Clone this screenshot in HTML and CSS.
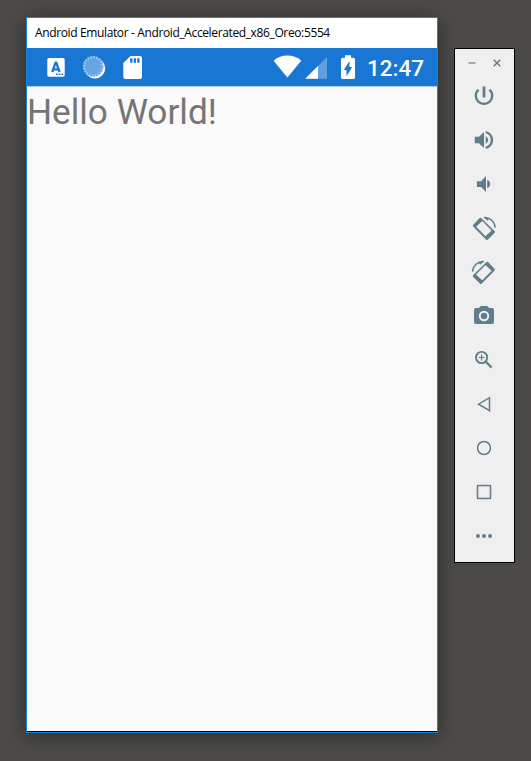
FILE: index.html
```html
<!DOCTYPE html>
<html lang="en">
<head>
<meta charset="utf-8">
<title>Android Emulator</title>
<link rel="stylesheet" href="styles.css">
</head>
<body>
<main class="desktop">
  <section class="emulator">
    <header class="titlebar"><span>Android Emulator - Android_Accelerated_x86_Oreo:5554</span></header>
    <div class="statusbar">
      <svg class="notifications" width="98" height="26" viewBox="46 54 98 26">
        <path fill="#fff" d="M49 58h14q1.700 0 1.700 1.700v15.300q0 1.700-1.700 1.700H49q-1.700 0-1.700-1.700V59.700q0-1.700 1.700-1.700z"/>
        <path fill="none" stroke="#1976d2" stroke-width="2.300" d="M52.200 72l3.400-9.400h.6L59.600 72M53.500 69.300h5"/>
        <path fill="#1976d2" d="M56 73.600h1.700v1.500H56zm2.700 0h1.700v1.500h-1.700zm2.700 0h1.700v1.500h-1.700z"/>
        <circle cx="94.900" cy="68.200" r="10.300" fill="#fff"/>
        <circle cx="93.200" cy="66.400" r="10.300" fill="#68a5e4"/>
        <circle cx="93.200" cy="66.400" r="9.300" fill="none" stroke="#acd0f2" stroke-width="2.200" stroke-dasharray="1.100 1.820"/>
        <path fill="#fff" d="M130.500 56h9.500q2 0 2 2v19q0 2-2 2h-14.700q-2 0-2-2V63z"/>
        <path fill="#1976d2" d="M130.200 58.300h2.300v4.500h-2.300zm3.500 0h2.300v4.500h-2.300zm3.500 0h2.300v4.500h-2.300z"/>
      </svg>
      <div class="system">
        <svg width="83" height="26" viewBox="273 54 83 26">
          <path fill="#fff" d="M287.400 77.600L273.600 60.700q6.100-5.100 13.800-5.100t13.900 5.100z"/>
          <path fill="#619fdf" d="M327 57v21.700h-21.700z"/>
          <path fill="#fff" d="M318 66v12.700h-12.700z"/>
          <path fill="#fff" d="M345 55.300h6v2.400h2.500q1.500 0 1.500 1.500v18.300q0 1.500-1.500 1.500h-11q-1.500 0-1.500-1.500V59.200q0-1.500 1.500-1.500h2.500z"/>
          <path fill="#1976d2" d="M349.400 61v6h2.800l-5.700 9.200V70h-2.700z"/>
        </svg>
        <span class="clock">12:47</span>
      </div>
    </div>
    <div class="screen"><p>Hello World!</p></div>
  </section>

  <aside class="toolbar">
    <div class="controls">
      <svg width="8" height="10" viewBox="0 0 8 10"><path d="M.5 5h7" stroke="#9aabb4" stroke-width="2"/></svg>
      <svg width="8" height="10" viewBox="0 0 8 10"><path d="M.7 1.700l6.600 6.600M7.300 1.700L.7 8.300" stroke="#607d8b" stroke-width="1.500"/></svg>
    </div>
    <svg class="tool" viewBox="0 0 24 24"><path fill="none" stroke="#607d8b" stroke-width="2.400" d="M6.500 5.700a8.200 8.200 0 1 0 11 0"/><path fill="#607d8b" d="M10.600 2.500h2.800v11h-2.800z"/></svg>
    <svg class="tool" viewBox="0 0 24 24"><path fill="#607d8b" d="M2.800 8.700v6.600h4.200L12 20V4L7 8.700zM13.700 8a4.500 4.500 0 0 1 0 8z"/><path fill="none" stroke="#607d8b" stroke-width="2.400" d="M13.700 4.200a8 8 0 0 1 0 15.600"/></svg>
    <svg class="tool" viewBox="0 0 24 24"><path fill="#607d8b" d="M4.900 9.200v5.800h4.200l4.900 5V4L9.100 9.200zM15.200 8a4.200 4.200 0 0 1 0 8z"/></svg>
    <svg class="tool" viewBox="0 0 24 24"><use href="#rotate"/></svg>
    <svg class="tool" viewBox="0 0 24 24"><use href="#rotate" transform="matrix(-1 0 0 1 23.700 0)"/></svg>
    <svg class="tool" viewBox="0 0 24 24"><path fill="#607d8b" fill-rule="evenodd" d="M8.700 2h6.600l1.800 2H20q2 0 2 2v12q0 2-2 2H4q-2 0-2-2V6q0-2 2-2h2.900zM12 6.800a5.200 5.200 0 1 0 0 10.400 5.200 5.200 0 0 0 0-10.400zm0 2a3.200 3.200 0 1 1 0 6.400 3.200 3.200 0 0 1 0-6.400z"/></svg>
    <svg class="tool" viewBox="0 0 24 24"><g fill="none" stroke="#607d8b"><circle cx="9.600" cy="9.500" r="5.600" stroke-width="1.900"/><path stroke-width="1.200" d="M6.700 9.500h5.800M9.600 6.600v5.800"/><path stroke-width="2.400" d="M13.600 13.500l6 6"/></g></svg>
    <svg class="tool" viewBox="0 0 24 24"><path class="line" d="M17.500 5.700v13L6.600 12.200z"/></svg>
    <svg class="tool" viewBox="0 0 24 24"><circle class="line" cx="12" cy="12" r="6.500"/></svg>
    <svg class="tool" viewBox="0 0 24 24"><rect class="line" x="5.500" y="5.500" width="13" height="13" rx=".5"/></svg>
    <svg class="tool" viewBox="0 0 24 24"><g fill="#607d8b"><circle cx="6" cy="12" r="2"/><circle cx="12" cy="12" r="2"/><circle cx="18" cy="12" r="2"/></g></svg>
  </aside>
</main>
<svg class="defs" width="0" height="0">
  <defs>
    <g id="rotate">
      <path fill="#607d8b" fill-rule="evenodd" d="M7.400 2.300q1-1 2 0L22.500 15.100q1 1 0 2L15.900 23.500q-1 1-2 0L1.300 10.700q-1-1 0-2zM10.200 5L4.200 10.800 13.500 20.300 19.600 14.500z"/>
      <path fill="none" stroke="#607d8b" stroke-width="1.500" d="M12 1.600c6-.4 10.800 4.200 11.100 10"/>
      <path fill="#607d8b" d="M11.300 1l4.200 3.700 1.600-2z"/>
    </g>
  </defs>
</svg>
</body>
</html>
```
FILE: styles.css
```css
* { box-sizing: border-box; }

body {
  margin: 0;
  background: #4b4a47;
  overflow: hidden;
}

.desktop {
  display: flex;
  align-items: flex-start;
  gap: 16px;
  height: 761px;
  padding: 17px 0 0 26px;
}

.emulator {
  display: flex;
  flex-direction: column;
  width: 412px;
  height: 716px;
  border: 1px solid #1883d7;
  background: #fafafa;
  box-shadow: 0 3px 18px rgba(0, 0, 0, 0.4);
}

.titlebar {
  display: flex;
  align-items: center;
  height: 30px;
  padding-left: 8px;
  background: #fff;
  color: #000;
  font: 12px/28px "Open Sans", sans-serif;
  letter-spacing: -0.37px;
  white-space: nowrap;
}

.titlebar span {
  margin-top: -1px;
}

.statusbar {
  display: flex;
  justify-content: space-between;
  height: 38px;
  padding: 6px 13px 0 19px;
  background: #1976d2;
}

.system {
  display: flex;
  gap: 11px;
}

.clock {
  color: #fff;
  font: 500 22.5px/28px Roboto, sans-serif;
}

.screen {
  flex: 1;
  border-top: 1px solid #a9cdf0;
  border-bottom: 1px solid #000;
}

.screen p {
  margin: 4px 0 0;
  color: #757575;
  font: 35.2px/42px Roboto, sans-serif;
}

.toolbar {
  display: flex;
  flex-direction: column;
  align-items: center;
  gap: 20px;
  width: 61px;
  height: 515px;
  margin-top: 31px;
  padding: 9px 1px 0 0;
  border: 1px solid #000;
  background: #efefef;
}

.controls {
  display: flex;
  gap: 17px;
  height: 10px;
  margin: 0 0 -4px 1px;
}

.tool {
  flex: none;
  width: 24px;
  height: 24px;
  overflow: visible;
}

.line {
  fill: none;
  stroke: #607d8b;
  stroke-width: 1.5;
}

.defs { position: absolute; }
```
